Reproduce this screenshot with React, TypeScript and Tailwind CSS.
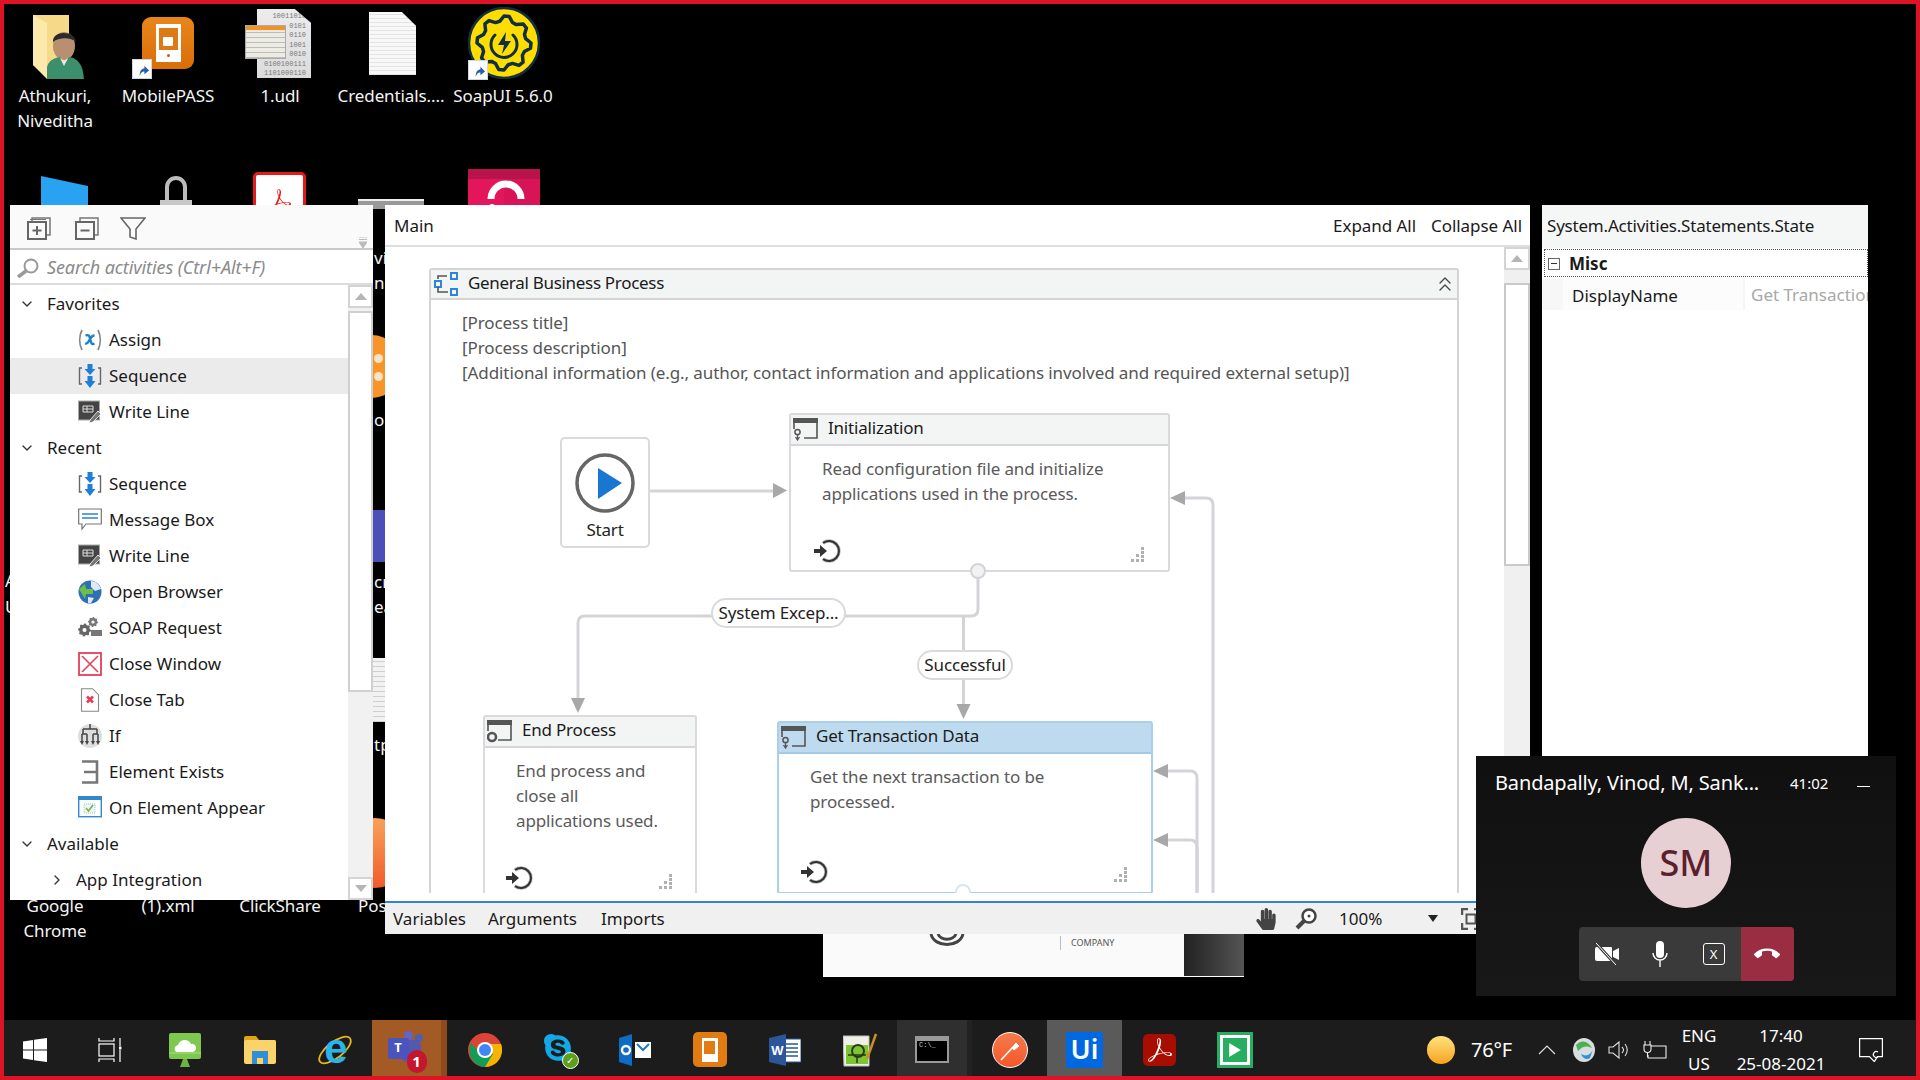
import { ChevronDown, ChevronRight, ChevronsUp } from 'lucide-react'
import { FaHandPaper, FaSkype } from 'react-icons/fa'
import { MdCallEnd } from 'react-icons/md'
import { SiAdobeacrobatreader } from 'react-icons/si'

// gear outline, used by the SoapUI logo and the SOAP Request activity
const gearPath = (cx: number, cy: number, r: number, teeth: number) => {
  const pts: string[] = []
  const steps = teeth * 4
  for (let i = 0; i < steps; i++) {
    const a = (i / steps) * Math.PI * 2
    const rad = i % 4 < 2 ? r : r * 0.82
    pts.push(`${(cx + Math.cos(a) * rad).toFixed(2)} ${(cy + Math.sin(a) * rad).toFixed(2)}`)
  }
  return `M${pts.join('L')}Z`
}

function Shortcut({ className }: { className: string }) {
  return (
    <div className={`absolute flex h-[20px] w-[20px] items-center justify-center border border-gray-300 bg-white ${className}`}>
      <svg viewBox="0 0 16 16" className="h-[15px] w-[15px]">
        <path d="M5 15c0-6 2-8 5-8V4l5 5-5 4v-3c-2 0-4 1-5 5z" fill="#2a5fa8" />
      </svg>
    </div>
  )
}

function DesktopLabel({ className, lines }: { className: string; lines: string[] }) {
  return (
    <div className={`absolute w-[124px] text-center text-[17px] leading-[25px] tracking-[-0.1px] text-[#f4f4f4] ${className}`}>
      {lines.map((l) => (
        <div key={l}>{l}</div>
      ))}
    </div>
  )
}

function DesktopIcons() {
  return (
    <>
      {/* Row 1 */}
      <svg viewBox="0 0 52 64" className="absolute left-[33px] top-[15px] h-[64px] w-[52px]">
        <path d="M0 0h36v60H14L0 50z" fill="#f7d98a" />
        <path d="M0 0l14 8v56L0 50z" fill="#fde9ab" />
        <ellipse cx="31" cy="31" rx="11" ry="14" fill="#b89070" />
        <path d="M20 27c-1-12 22-12 23 0-5-5-17-5-23 0z" fill="#2b2b2b" />
        <path d="M14 64V52c2-8 9-9 13-10l4 8 5-8c6 1 14 4 15 22z" fill="#3c8f6c" />
        <path d="M27 43l4 8 4-8-4 3z" fill="#e8e8e8" />
      </svg>
      <DesktopLabel className="left-[-7px] top-[83px]" lines={['Athukuri,', 'Nivedditha'.replace('dd', 'd')]} />

      <div className="absolute left-[142px] top-[17px] flex h-[52px] w-[52px] items-center justify-center rounded-[9px] bg-gradient-to-b from-[#e9861a] to-[#d96e08]">
        <div className="flex h-[38px] w-[25px] flex-col items-center bg-white pt-[4px]">
          <div className="flex h-[22px] w-[19px] items-center justify-center bg-[#dd7a16]">
            <div className="mt-[4px] h-[9px] w-[10px] rounded-[1px] bg-white" />
          </div>
          <div className="mt-[4px] h-[3px] w-[3px] rounded-full bg-[#d8501a]" />
        </div>
      </div>
      <Shortcut className="left-[132px] top-[59px]" />
      <DesktopLabel className="left-[106px] top-[83px]" lines={['MobilePASS']} />

      <div className="absolute left-[257px] top-[9px] h-[69px] w-[54px] bg-gradient-to-b from-[#ececec] to-[#dcdcdc] pr-[5px] pt-[3px] text-right font-['Liberation_Mono',monospace] text-[7px] leading-[9.5px] text-[#777] [clip-path:polygon(0_0,70%_0,100%_20%,100%_100%,0_100%)]">
        10011010<br />0101<br />0110<br />1001<br />0010<br />0100100111<br />1101000110
      </div>
      <div className="absolute left-[245px] top-[25px] h-[34px] w-[41px] border border-[#aaa] bg-[#e8e5dc]">
        <div className="h-[4px] bg-[#f0932b]" />
        <div className="mt-[1px] h-[27px] bg-[repeating-linear-gradient(0deg,#bdbdb5_0,#bdbdb5_1px,#ecebe4_1px,#ecebe4_5px)]" />
      </div>
      <DesktopLabel className="left-[218px] top-[83px]" lines={['1.udl']} />

      <div className="absolute left-[369px] top-[12px] h-[63px] w-[47px] bg-[repeating-linear-gradient(0deg,#e2e2e2_0,#e2e2e2_1px,#f8f8f8_1px,#f8f8f8_4px)] [clip-path:polygon(0_0,70%_0,100%_22%,100%_100%,0_100%)]" />
      <DesktopLabel className="left-[329px] top-[83px]" lines={['Credentials....']} />

      <svg viewBox="0 0 72 72" className="absolute left-[468px] top-[7px] h-[72px] w-[72px]">
        <circle cx="36" cy="36" r="35" fill="#ffdd00" stroke="#0e2f44" strokeWidth="2.500" />
        <path d={gearPath(36, 36, 27, 8)} fill="none" stroke="#0e2f44" strokeWidth="3.500" strokeLinejoin="round" />
        <path d="M27 28a13 13 0 1 0 18 0" fill="none" stroke="#0e2f44" strokeWidth="3" strokeLinecap="round" />
        <path d="M38 25l-8 13h6l-2 9 9-13h-6z" fill="#0e2f44" />
      </svg>
      <Shortcut className="left-[468px] top-[60px]" />
      <DesktopLabel className="left-[441px] top-[83px]" lines={['SoapUI 5.6.0']} />

      {/* Row 2, mostly behind the studio panels */}
      <div className="absolute left-[41px] top-[176px] h-[40px] w-[47px] bg-[#2aa2f2] [clip-path:polygon(0_0,100%_25%,100%_100%,0_100%)]" />
      <svg viewBox="0 0 32 34" className="absolute left-[160px] top-[175px] h-[34px] w-[32px]">
        <path d="M7 26V12a9 9 0 0 1 18 0v14" fill="none" stroke="#bbb" strokeWidth="4" />
        <rect x="0" y="25" width="32" height="9" fill="#c8c8c8" />
      </svg>
      <div className="absolute left-[253px] top-[172px] flex h-[40px] w-[53px] items-start justify-center rounded-[5px] border-[3px] border-[#e8181b] bg-white pt-[14px] text-[#e8181b]">
        <SiAdobeacrobatreader size={22} />
      </div>
      <div className="absolute left-[358px] top-[199px] h-[10px] w-[66px] border-t-2 border-[#eee] bg-[#999]" />
      <svg viewBox="0 0 72 40" className="absolute left-[468px] top-[169px] h-[40px] w-[72px]">
        <rect x="0" y="0" width="72" height="40" fill="#e3155b" />
        <rect x="0" y="0" width="72" height="10" fill="#b8134a" />
        <rect x="36" y="10" width="36" height="30" fill="#d91456" />
        <path d="M23 30a15 15 0 0 1 30 0" fill="none" stroke="#fff" strokeWidth="7" />
        <circle cx="24" cy="38" r="3" fill="#fff" />
      </svg>

      {/* Icons and labels that show through the gap between the panels */}
      <div className="absolute left-[340px] top-[335px] h-[63px] w-[63px] rounded-full bg-[#f7952a]" />
      <div className="absolute left-[374px] top-[354px] h-[9px] w-[9px] rounded-full bg-[#fbe2c2]" />
      <div className="absolute left-[374px] top-[372px] h-[9px] w-[9px] rounded-full bg-[#fbe2c2]" />
      <div className="absolute left-[350px] top-[510px] h-[52px] w-[45px] rounded-[8px] bg-[#4b50b8]" />
      <div className="absolute left-[340px] top-[658px] h-[64px] w-[60px] bg-[repeating-linear-gradient(0deg,#cfcfcf_0,#cfcfcf_1px,#f2f2f2_1px,#f2f2f2_5px)]" />
      <div className="absolute left-[340px] top-[818px] h-[70px] w-[70px] rounded-full bg-gradient-to-b from-[#f9a05a] to-[#f05a2a]" />
      {[
        ['vi', 'top-[245px]'],
        ['n', 'top-[270px]'],
        ['oN', 'top-[407px]'],
        ['cr', 'top-[569px]'],
        ['ea', 'top-[594px]'],
        ['tp', 'top-[732px]'],
      ].map(([t, cls]) => (
        <span key={t} className={`absolute left-[374px] text-[17px] leading-[25px] text-[#f4f4f4] ${cls}`}>
          {t}
        </span>
      ))}
      <span className="absolute left-[5px] top-[568px] text-[17px] leading-[25px] text-[#f4f4f4]">A</span>
      <span className="absolute left-[5px] top-[594px] text-[17px] leading-[25px] text-[#f4f4f4]">U</span>
      <DesktopLabel className="left-[-7px] top-[893px]" lines={['Google', 'Chrome']} />
      <DesktopLabel className="left-[106px] top-[893px]" lines={['(1).xml']} />
      <DesktopLabel className="left-[218px] top-[893px]" lines={['ClickShare']} />
      <span className="absolute left-[358px] top-[893px] text-[17px] leading-[25px] text-[#f4f4f4]">Pos</span>

      {/* Picture left open behind the studio window */}
      <div className="absolute left-[823px] top-[920px] flex h-[57px] w-[421px] border-b border-white bg-[#fafafa]">
        <div className="relative flex-1">
          <svg viewBox="0 0 36 14" className="absolute left-[106px] top-[14px] h-[14px] w-[36px]">
            <path d="M2 0c3 14 29 14 32 0M9 0c3 7 15 7 18 0" fill="none" stroke="#444" strokeWidth="3" />
          </svg>
          <div className="absolute left-[237px] top-[16px] h-[14px] w-px bg-[#bbb]" />
          <span className="absolute left-[248px] top-[16px] text-[9px] leading-[13px] text-[#555]">COMPANY</span>
        </div>
        <div className="w-[60px] bg-gradient-to-r from-[#222] to-[#555]" />
      </div>
    </>
  )
}

/* ---- activity tree icons, all 24x24 ---- */
function SequenceIcon() {
  return (
    <svg viewBox="0 0 24 24" className="h-[24px] w-[24px]">
      <path d="M4 4H1.500v16H4M20 4h2.500v16H20" fill="none" stroke="#666" strokeWidth="1.400" />
      <path d="M9.500 0h5v5h3L12 11 6.500 5h3zM9.500 12h5v5h3L12 24l-5.500-7h3z" fill="#1f7fd6" />
    </svg>
  )
}
function WriteLineIcon() {
  return (
    <svg viewBox="0 0 24 24" className="h-[24px] w-[24px]">
      <rect x="0.500" y="1" width="21" height="19" fill="#444" stroke="#aaa" />
      <path d="M5 6h10v6H5z" fill="none" stroke="#ddd" />
      <path d="M9 6v6M5 9h10" stroke="#ddd" />
      <path d="M12 20l8-9 3 3-8 8-4 1z" fill="#777" stroke="#fff" strokeWidth="0.800" />
    </svg>
  )
}
function AssignIcon() {
  return (
    <svg viewBox="0 0 24 24" className="h-[24px] w-[24px]">
      <path d="M4 2C1 8 1 16 4 22M20 2c3 6 3 14 0 20" fill="none" stroke="#888" strokeWidth="1.800" />
      <path d="M7.500 7.500c3-1 4 0 4.500 3l1 3.500c.5 2 1.500 2.500 3.500 1.500M16.500 7.500c-2.500 0-4 2.500-5 4.500s-2.500 4-4.500 3.500" fill="none" stroke="#1784c7" strokeWidth="2.400" />
    </svg>
  )
}
function MessageBoxIcon() {
  return (
    <svg viewBox="0 0 24 24" className="h-[24px] w-[24px]">
      <path d="M.7 1h22.600v15H8l-4 5v-5H.7z" fill="#fff" stroke="#777" strokeWidth="1.200" />
      <path d="M4 6h16M4 10h16" stroke="#2b83d8" strokeWidth="1.600" />
    </svg>
  )
}
function OpenBrowserIcon() {
  return (
    <svg viewBox="0 0 24 24" className="h-[24px] w-[24px]">
      <circle cx="12" cy="12" r="11.500" fill="#2f6fb5" />
      <path d="M13 1c5 0 8 3 10 8l-6 2-4-4zM10 17l6 1-3 5h-3z" fill="#dfe9f3" />
      <path d="M1 9l6-5 1 5h7v5H8l-1 5z" fill="#6cc04a" />
    </svg>
  )
}
function SoapIcon() {
  return (
    <svg viewBox="0 0 24 24" className="h-[24px] w-[24px]">
      <path d={gearPath(6.500, 14, 6.500, 8)} fill="#666" />
      <circle cx="6.500" cy="14" r="2" fill="#fff" />
      <path d={gearPath(15, 6, 5, 8)} fill="#777" />
      <circle cx="15" cy="6" r="1.600" fill="#fff" />
      <rect x="13" y="14" width="11" height="6" fill="#777" />
    </svg>
  )
}
function CloseWindowIcon() {
  return (
    <svg viewBox="0 0 24 24" className="h-[24px] w-[24px]">
      <rect x="1" y="1" width="22" height="22" fill="#fff" stroke="#e63e5c" strokeWidth="1.800" />
      <path d="M4 4l16 16M20 4L4 20" stroke="#e63e5c" strokeWidth="1.600" />
    </svg>
  )
}
function CloseTabIcon() {
  return (
    <svg viewBox="0 0 24 24" className="h-[24px] w-[24px]">
      <path d="M3.500.7h11l6 6v16.600h-17z" fill="#fff" stroke="#888" strokeWidth="1.100" />
      <path d="M9 8.500l6 6M15 8.500l-6 6" stroke="#e63e5c" strokeWidth="2.600" />
    </svg>
  )
}
function IfIcon() {
  return (
    <svg viewBox="0 0 24 24" className="h-[24px] w-[24px]">
      <circle cx="12" cy="12" r="12" fill="#dedede" />
      <path d="M12 0v5M5 5h14M5 5v5M19 5v5M4 10v8M9 10v8M15 10v8M20 10v8M4 10h5M15 10h5" fill="none" stroke="#444" strokeWidth="1.500" />
      <path d="M2 17h4l-2 4zM7 17h4l-2 4zM13 17h4l-2 4zM18 17h4l-2 4z" fill="#444" />
    </svg>
  )
}
function ExistsIcon() {
  return (
    <svg viewBox="0 0 24 24" className="h-[24px] w-[24px]">
      <path d="M4 1.500h15v21H4M6 12h13" fill="none" stroke="#777" strokeWidth="2.600" />
    </svg>
  )
}
function AppearIcon() {
  return (
    <svg viewBox="0 0 24 24" className="h-[24px] w-[24px]">
      <rect x=".7" y=".7" width="22.600" height="20" fill="#fff" stroke="#3388cc" strokeWidth="1.400" />
      <rect x="0" y="0" width="24" height="4" fill="#3388cc" />
      <rect x="6" y="8" width="11" height="9" fill="#eef5fb" stroke="#9cc" strokeDasharray="1 1" />
      <path d="M8 12l2.500 3L15 9" fill="none" stroke="#7ab53a" strokeWidth="1.600" />
    </svg>
  )
}

type Row =
  | { kind: 'group'; label: string }
  | { kind: 'sub'; label: string }
  | { kind: 'item'; label: string; icon: React.ReactNode; active?: boolean }

const rows: Row[] = [
  { kind: 'group', label: 'Favorites' },
  { kind: 'item', label: 'Assign', icon: <AssignIcon /> },
  { kind: 'item', label: 'Sequence', icon: <SequenceIcon />, active: true },
  { kind: 'item', label: 'Write Line', icon: <WriteLineIcon /> },
  { kind: 'group', label: 'Recent' },
  { kind: 'item', label: 'Sequence', icon: <SequenceIcon /> },
  { kind: 'item', label: 'Message Box', icon: <MessageBoxIcon /> },
  { kind: 'item', label: 'Write Line', icon: <WriteLineIcon /> },
  { kind: 'item', label: 'Open Browser', icon: <OpenBrowserIcon /> },
  { kind: 'item', label: 'SOAP Request', icon: <SoapIcon /> },
  { kind: 'item', label: 'Close Window', icon: <CloseWindowIcon /> },
  { kind: 'item', label: 'Close Tab', icon: <CloseTabIcon /> },
  { kind: 'item', label: 'If', icon: <IfIcon /> },
  { kind: 'item', label: 'Element Exists', icon: <ExistsIcon /> },
  { kind: 'item', label: 'On Element Appear', icon: <AppearIcon /> },
  { kind: 'group', label: 'Available' },
  { kind: 'sub', label: 'App Integration' },
]

function ArrowBtn({ down, className }: { down?: boolean; className: string }) {
  return (
    <div className={`flex shrink-0 items-center justify-center border-2 border-[#d4d4d4] bg-white ${className}`}>
      <svg viewBox="0 0 12 7" className="h-[7px] w-[12px]">
        <path d={down ? 'M0 0h12L6 7z' : 'M0 7h12L6 0z'} fill="#b5b5b5" />
      </svg>
    </div>
  )
}

function ActivitiesPanel() {
  return (
    <div className="absolute left-[10px] top-[205px] flex h-[695px] w-[363px] flex-col bg-white text-[17px] text-[#1a1a1a]">
      <div className="relative flex h-[45px] items-center gap-[24px] border-b-2 border-[#c9c9c9] bg-[#fafafa] pl-[17px] pt-[3px]">
        <svg viewBox="0 0 24 23" className="h-[23px] w-[24px]">
          <path d="M5 4V1h18v17h-3" fill="none" stroke="#777" strokeWidth="1.500" />
          <path d="M3 2.500h16" stroke="#777" />
          <rect x="1" y="5" width="18" height="17" fill="#fafafa" stroke="#666" strokeWidth="2" />
          <path d="M10 9v9M5.500 13.500h9" stroke="#666" strokeWidth="2" />
        </svg>
        <svg viewBox="0 0 24 23" className="h-[23px] w-[24px]">
          <path d="M5 4V1h18v17h-3" fill="none" stroke="#777" strokeWidth="1.500" />
          <rect x="1" y="5" width="18" height="17" fill="#fafafa" stroke="#666" strokeWidth="2" />
          <path d="M5.500 13.500h9" stroke="#666" strokeWidth="2" />
        </svg>
        <svg viewBox="0 0 26 23" className="-ml-[3px] h-[23px] w-[26px]">
          <path d="M1 1h24l-9 11v10l-6-2v-8z" fill="none" stroke="#666" strokeWidth="1.600" />
        </svg>
        <svg viewBox="0 0 8 11" className="absolute right-[6px] top-[32px] h-[11px] w-[8px]">
          <path d="M0 0h8M0 2.500h8M0 5h8l-4 6z" stroke="#bbb" fill="#bbb" />
        </svg>
      </div>
      <div className="flex h-[35px] items-center gap-[7px] border-b-2 border-[#dcdcdc] pl-[6px] pt-[2px]">
        <svg viewBox="0 0 24 20" className="h-[20px] w-[24px]">
          <circle cx="15" cy="8" r="6.500" fill="#fff" stroke="#999" strokeWidth="2" />
          <path d="M10 13L2 19" stroke="#999" strokeWidth="3.500" />
        </svg>
        <span className="text-[18px] italic tracking-[-0.1px] text-[#8a8a8a]">Search activities (Ctrl+Alt+F)</span>
      </div>
      <div className="flex min-h-0 flex-1">
        <div className="w-[338px] overflow-hidden pt-[1px]">
          {rows.map((r, i) => {
            if (r.kind === 'group') {
              return (
                <div key={i} className="flex h-[36px] items-center gap-[12px] pl-[9px]">
                  <ChevronDown size={16} strokeWidth={2} className="text-[#333]" />
                  <span>{r.label}</span>
                </div>
              )
            }
            if (r.kind === 'sub') {
              return (
                <div key={i} className="flex h-[36px] items-center gap-[11px] pl-[39px]">
                  <ChevronRight size={16} strokeWidth={2} className="text-[#333]" />
                  <span>{r.label}</span>
                </div>
              )
            }
            return (
              <div key={i} className={`flex h-[36px] items-center gap-[7px] pl-[68px] ${r.active ? 'bg-[#ebebeb]' : ''}`}>
                {r.icon}
                <span>{r.label}</span>
              </div>
            )
          })}
        </div>
        <div className="flex w-[25px] flex-col bg-[#f1f1f1]">
          <ArrowBtn className="h-[23px]" />
          <div className="mt-[3px] h-[381px] border-2 border-[#d0d0d0] bg-white" />
          <div className="flex-1" />
          <ArrowBtn down className="h-[23px]" />
        </div>
      </div>
    </div>
  )
}

/* ---- flowchart ---- */
function EntryIcon({ className }: { className: string }) {
  return (
    <svg viewBox="0 0 28 26" className={`absolute h-[26px] w-[28px] ${className}`}>
      <path d="M10 5a10 10 0 1 1 0 16" fill="none" stroke="#bbb" strokeWidth="3.500" />
      <path d="M10 5a10 10 0 1 1 0 16" fill="none" stroke="#333" strokeWidth="2" />
      <path d="M1 11h6V7l7 6-7 6v-4H1z" fill="#333" />
    </svg>
  )
}
function Grip({ className }: { className: string }) {
  return (
    <svg viewBox="0 0 15 15" className={`absolute h-[15px] w-[15px] ${className}`} fill="#b0b0b0">
      <rect x="11" y="0" width="3" height="3" />
      <rect x="11" y="4" width="3" height="3" />
      <rect x="6" y="7" width="3" height="3" />
      <rect x="11" y="8" width="3" height="3" />
      <rect x="1" y="12" width="3" height="3" />
      <rect x="6" y="12" width="3" height="3" />
      <rect x="11" y="12" width="3" height="3" />
    </svg>
  )
}
function StateIcon({ big }: { big?: boolean }) {
  return (
    <svg viewBox="0 0 25 23" className="h-[23px] w-[25px] shrink-0">
      <rect x="0" y="0" width="25" height="5" fill="#555" />
      <path d="M24 5v15H11M1 5v6" fill="none" stroke="#555" strokeWidth="1.600" />
      {big ? (
        <circle cx="5" cy="17" r="4" fill="none" stroke="#555" strokeWidth="2.600" />
      ) : (
        <>
          <circle cx="4.500" cy="14" r="2.600" fill="none" stroke="#555" strokeWidth="1.500" />
          <path d="M4.500 16v6M2.500 19l2 3 2-3" fill="none" stroke="#555" strokeWidth="1.300" />
        </>
      )}
    </svg>
  )
}

function StateNode({
  title,
  lines,
  selected,
  big,
  className,
  children,
}: {
  title: string
  lines: string[]
  selected?: boolean
  big?: boolean
  className: string
  children: React.ReactNode
}) {
  return (
    <div className={`absolute rounded-[3px] border-2 bg-white ${selected ? 'border-[#a9cfeb]' : 'border-[#dadade]'} ${className}`}>
      <div
        className={`flex h-[31px] items-center gap-[10px] border-b-2 pl-[2px] text-[17px] tracking-[-0.2px] text-[#1a1a1a] ${
          selected ? 'border-[#a3cbe8] bg-[#bddaef]' : 'border-[#d6d6da] bg-[#f3f5f5]'
        }`}
      >
        <StateIcon big={big} />
        <span className="pb-[3px]">{title}</span>
      </div>
      <div className="pl-[31px] pt-[10px] text-[17px] leading-[25px] tracking-[-0.12px] text-[#5a5a5a]">
        {lines.map((l) => (
          <div key={l}>{l}</div>
        ))}
      </div>
      {children}
    </div>
  )
}

function Pill({ className, children }: { className: string; children: React.ReactNode }) {
  return (
    <div className={`absolute flex items-center justify-center rounded-full border-2 border-[#dadade] bg-white pb-[1px] text-[17px] tracking-[-0.15px] text-[#222] ${className}`}>
      {children}
    </div>
  )
}

function Diagram() {
  const line = '#d3d3d8'
  const head = '#a8a8a8'
  return (
    <div className="relative flex-1 overflow-hidden">
      {/* connectors, drawn in screen coordinates */}
      <svg viewBox="431 300 1026 593" className="absolute left-0 top-0 h-[593px] w-[1026px]">
        <path d="M649 491H775" fill="none" stroke={line} strokeWidth="3" />
        <path d="M773 483l14 7.500-14 7.500z" fill={head} />
        <path d="M978 575v34q0 7-7 7H585q-7 0-7 7v76" fill="none" stroke={line} strokeWidth="3" />
        <path d="M571 698h14l-7 15z" fill={head} />
        <path d="M963.500 616v90" fill="none" stroke={line} strokeWidth="3" />
        <path d="M956.500 704h14l-7 15z" fill={head} />
        <path d="M1168 771h22q7 0 7 7v115" fill="none" stroke={line} strokeWidth="3" />
        <path d="M1168 764v14l-15-7z" fill={head} />
        <path d="M1168 840h22q7 0 7 7v46" fill="none" stroke={line} strokeWidth="3" />
        <path d="M1168 833v14l-15-7z" fill={head} />
        <path d="M1185 498h21q7 0 7 7v388" fill="none" stroke={line} strokeWidth="3" />
        <path d="M1185 491v14l-15-7z" fill={head} />
      </svg>

      <div className="absolute left-[129px] top-[137px] flex h-[111px] w-[90px] flex-col items-center rounded-[5px] border-2 border-[#dadade] bg-white pt-[14px] text-[17px] tracking-[-0.2px] text-[#222]">
        <svg viewBox="0 0 60 60" className="h-[60px] w-[60px]">
          <circle cx="30" cy="30" r="28" fill="#fff" stroke="#666" strokeWidth="3.500" />
          <path d="M23 15l24 15-24 16z" fill="#1976d2" />
        </svg>
        <span className="mt-[4px]">Start</span>
      </div>

      <StateNode
        title="Initialization"
        lines={['Read configuration file and initialize', 'applications used in the process.']}
        className="left-[358px] top-[113px] h-[159px] w-[381px]"
      >
        <EntryIcon className="left-[22px] top-[123px]" />
        <Grip className="left-[339px] top-[132px]" />
      </StateNode>

      <StateNode
        title="End Process"
        big
        lines={['End process and', 'close all', 'applications used.']}
        className="left-[52px] top-[415px] h-[200px] w-[214px]"
      >
        <EntryIcon className="left-[20px] top-[148px]" />
        <Grip className="left-[173px] top-[157px]" />
      </StateNode>

      <StateNode
        selected
        title="Get Transaction Data"
        lines={['Get the next transaction to be', 'processed.']}
        className="left-[346px] top-[421px] h-[173px] w-[376px]"
      >
        <EntryIcon className="left-[21px] top-[136px]" />
        <Grip className="left-[334px] top-[144px]" />
      </StateNode>

      {/* connection points */}
      <div className="absolute left-[539px] top-[263px] h-[16px] w-[16px] rounded-full border-2 border-[#d3d3d8] bg-[#f2f2f2]" />
      <div className="absolute left-[524px] top-[584px] h-[16px] w-[16px] rounded-full border-2 border-[#d9e6f1] bg-white" />

      <Pill className="left-[280px] top-[298px] h-[30px] w-[135px]">System Excep...</Pill>
      <Pill className="left-[486px] top-[350px] h-[30px] w-[96px]">Successful</Pill>
    </div>
  )
}

function MainWindow() {
  return (
    <div className="absolute left-[385px] top-[205px] flex h-[729px] w-[1145px] flex-col bg-white text-[17px] text-[#1a1a1a]">
      <div className="flex h-[42px] shrink-0 items-center justify-between border-b-2 border-[#dedede] pl-[9px] pr-[8px] pt-[2px]">
        <span>Main</span>
        <div className="flex gap-[15px] tracking-[-0.05px]">
          <span>Expand All</span>
          <span>Collapse All</span>
        </div>
      </div>
      <div className="flex min-h-0 flex-1">
        <div className="min-w-0 flex-1 pl-[44px] pt-[21px]">
          <div className="flex h-[625px] w-[1030px] flex-col rounded-t-[3px] border-x-2 border-t-2 border-[#d3d3d8]">
            <div className="flex h-[30px] shrink-0 items-center gap-[10px] border-b-2 border-[#d3d3d8] bg-[#f3f5f5] pl-[3px]">
              <svg viewBox="0 0 24 24" className="h-[24px] w-[24px]" fill="none">
                <rect x="17" y="1" width="6" height="6" stroke="#2f86d6" strokeWidth="2" />
                <rect x="1" y="9" width="6" height="6" stroke="#2f86d6" strokeWidth="2" />
                <rect x="17" y="17" width="6" height="6" stroke="#2f86d6" strokeWidth="2" />
                <path d="M13 4H4v3M4 15v5h10" stroke="#555" strokeWidth="1.600" />
              </svg>
              <span className="flex-1 pb-[2px] tracking-[-0.3px]">General Business Process</span>
              <ChevronsUp size={24} strokeWidth={1.300} className="text-[#444]" />
            </div>
            <div className="relative flex min-h-0 flex-1 flex-col">
              <div className="pl-[31px] pt-[10px] text-[17px] leading-[25px] tracking-[-0.08px] text-[#555]">
                <div>[Process title]</div>
                <div>[Process description]</div>
                <div>[Additional information (e.g., author, contact information and applications involved and required external setup)]</div>
              </div>
              <div className="absolute inset-0 flex">
                <Diagram />
              </div>
            </div>
          </div>
        </div>
        <div className="flex w-[26px] shrink-0 flex-col bg-[#f0f0f0]">
          <ArrowBtn className="h-[23px]" />
          <div className="mt-[13px] h-[283px] border-2 border-[#c9c9c9] bg-white" />
        </div>
      </div>
      <div className="flex h-[33px] shrink-0 items-center border-t-2 border-[#2f86d6] bg-[#f0f0f0] pl-[8px] pr-[49px]">
        <span className="w-[95px] shrink-0">Variables</span>
        <span className="w-[113px] shrink-0">Arguments</span>
        <span className="shrink-0">Imports</span>
        <div className="ml-auto flex items-center">
          <FaHandPaper size={22} className="text-[#444]" />
          <svg viewBox="0 0 22 22" className="ml-[18px] h-[22px] w-[22px]">
            <circle cx="14" cy="8" r="6.500" fill="#fff" stroke="#444" strokeWidth="2.500" />
            <path d="M9 13L2 20" stroke="#444" strokeWidth="4" />
            <circle cx="14" cy="8" r="1.500" fill="#444" />
          </svg>
          <span className="ml-[22px] w-[89px]">100%</span>
          <svg viewBox="0 0 10 7" className="h-[7px] w-[10px]">
            <path d="M0 0h10L5 7z" fill="#222" />
          </svg>
          <svg viewBox="0 0 20 22" className="ml-[23px] h-[22px] w-[20px]">
            <path d="M1 7V1h6M19 7V1h-6M1 15v6h6M19 15v6h-6" fill="none" stroke="#555" strokeWidth="2.500" />
            <rect x="5.500" y="6.500" width="9" height="9" fill="none" stroke="#555" strokeWidth="2" />
          </svg>
        </div>
      </div>
    </div>
  )
}

function PropertyPanel() {
  return (
    <div className="absolute left-[1542px] top-[205px] flex h-[551px] w-[326px] flex-col bg-white text-[17px] text-[#1a1a1a]">
      <div className="flex h-[43px] shrink-0 items-center bg-[#f5f7f7] pb-[2px] pl-[5px] tracking-[-0.2px]">System.Activities.Statements.State</div>
      <div className="ml-[2px] mt-[1px] flex h-[28px] shrink-0 items-center gap-[9px] border border-dotted border-[#555] pl-[3px] pt-[1px] font-bold">
        <span className="flex h-[12px] w-[12px] items-center justify-center border border-[#666]">
          <span className="h-px w-[6px] bg-[#333]" />
        </span>
        <span>Misc</span>
      </div>
      <div className="mt-[2px] flex h-[31px] shrink-0 items-center">
        <div className="h-full w-[21px] bg-[#f7f7f7]" />
        <div className="flex h-full w-[182px] items-center border-r-2 border-[#f5f5f5] bg-[#fcfcfc] pl-[9px] pt-[2px]">DisplayName</div>
        <div className="min-w-0 flex-1 overflow-hidden whitespace-nowrap pl-[6px] text-[#a8a8a8]">Get Transaction Data</div>
      </div>
    </div>
  )
}

function CallPanel() {
  return (
    <div className="absolute left-[1476px] top-[756px] flex h-[240px] w-[420px] flex-col items-center bg-gradient-to-b from-[#101010] to-[#181818] text-white">
      <div className="flex h-[54px] w-full shrink-0 items-center pl-[19px]">
        <span className="w-[295px] text-[20px] tracking-[-0.15px]">Bandapally, Vinod, M, Sank...</span>
        <span className="w-[67px] text-[15px]">41:02</span>
        <span className="mt-[7px] h-[1.500px] w-[13px] bg-white" />
      </div>
      <div className="mt-[8px] flex h-[90px] w-[90px] items-center justify-center rounded-full bg-[#e6d0d4] text-[36px] font-medium text-[#5c1f2c]">
        SM
      </div>
      <div className="mt-[19px] flex h-[54px] w-[215px] overflow-hidden rounded-[4px] bg-[#3a3a3a]">
        <div className="flex w-[54px] items-center justify-center pl-[2px]">
          <svg viewBox="0 0 24 22" className="h-[22px] w-[24px]">
            <path d="M2 4h14a1 1 0 0 1 1 1v12a1 1 0 0 1-1 1H2a2 2 0 0 1-2-2V6a2 2 0 0 1 2-2zM18 8l6-3v12l-6-3z" fill="#fff" />
            <path d="M1 0l20 22" stroke="#3a3a3a" strokeWidth="3" />
            <path d="M1 0l20 22" stroke="#fff" strokeWidth="1" />
          </svg>
        </div>
        <div className="flex w-[54px] items-center justify-center">
          <svg viewBox="0 0 16 26" className="h-[26px] w-[16px]">
            <rect x="4" y="0" width="8" height="17" rx="4" fill="#fff" />
            <path d="M1 12a7 7 0 0 0 14 0M8 19v7" fill="none" stroke="#fff" strokeWidth="1.400" />
          </svg>
        </div>
        <div className="flex w-[54px] items-center justify-center">
          <div className="flex h-[22px] w-[22px] items-center justify-center rounded-[3px] border border-white text-[13px] leading-none">X</div>
        </div>
        <div className="flex flex-1 items-center justify-center bg-[#9b2d42]">
          <MdCallEnd size={26} className="text-white" />
        </div>
      </div>
    </div>
  )
}

/* ---- taskbar ---- */
function WinLogo() {
  return (
    <svg viewBox="0 0 24 24" className="h-[24px] w-[24px]" fill="#fff">
      <path d="M0 3.500l10-1.500v9.500H0zM11 1.800L24 0v11.500H11zM0 12.500h10V22L0 20.500zM11 12.500h13V24l-13-1.800z" />
    </svg>
  )
}
function TaskView() {
  return (
    <svg viewBox="0 0 24 24" className="h-[24px] w-[24px]" fill="none" stroke="#fff" strokeWidth="1.200">
      <path d="M1 0v3h15V0M1 24v-3h15v3" />
      <rect x="1" y="6" width="15" height="12" />
      <path d="M22 0v8M22 12v12" />
      <rect x="21" y="8.500" width="2.400" height="3" fill="#fff" stroke="none" />
    </svg>
  )
}
const taskIcons: { key: string; active?: 'orange' | 'dim' | 'light'; icon: React.ReactNode }[] = [
  { key: 'start', icon: <WinLogo /> },
  { key: 'view', icon: <TaskView /> },
  {
    key: 'cloud',
    icon: (
      <svg viewBox="0 0 32 34" className="h-[34px] w-[32px]">
        <rect x="0" y="0" width="32" height="26" rx="2" fill="#7ec850" />
        <path d="M7 19a4 4 0 0 1 2-7 7 7 0 0 1 13-1 4 4 0 0 1 2 8z" fill="#fff" />
        <path d="M0 20h32" stroke="#a7e07e" />
        <path d="M11 34l3-8h4l3 8z" fill="#6db33f" />
      </svg>
    ),
  },
  {
    key: 'folder',
    icon: (
      <svg viewBox="0 0 32 28" className="h-[28px] w-[32px]">
        <path d="M0 2a2 2 0 0 1 2-2h10l3 4h15a2 2 0 0 1 2 2v4H0z" fill="#e0a515" />
        <rect x="0" y="4" width="32" height="24" rx="2" fill="#fcd36a" />
        <path d="M8 28V15h16v13h-5v-6h-6v6z" fill="#2f8fd8" />
      </svg>
    ),
  },
  {
    key: 'ie',
    icon: (
      <svg viewBox="0 0 34 34" className="h-[34px] w-[34px] overflow-visible">
        <ellipse cx="17" cy="17" rx="19" ry="8" transform="rotate(-38 17 17)" fill="none" stroke="#e6b518" strokeWidth="1.800" />
        <text x="18" y="30" textAnchor="middle" fontFamily="Liberation Sans, sans-serif" fontWeight="700" fontSize="42" fill="#2ab4ea">
          e
        </text>
      </svg>
    ),
  },
  {
    key: 'teams',
    active: 'orange',
    icon: (
      <div className="relative h-[38px] w-[38px]">
        <div className="absolute left-[16px] top-0 h-[9px] w-[9px] rounded-full bg-[#6264c8]" />
        <div className="absolute left-[27px] top-[3px] h-[8px] w-[8px] rounded-full bg-[#4e5eb0]" />
        <div className="absolute left-[13px] top-[9px] h-[22px] w-[20px] rounded-[6px] bg-[#5558af]" />
        <div className="absolute left-0 top-[7px] flex h-[21px] w-[21px] items-center justify-center rounded-[2px] bg-[#4b53bc] text-[13px] font-bold text-white">T</div>
        <div className="absolute left-[19px] top-[19px] flex h-[23px] w-[20px] items-center justify-center rounded-full bg-[#c4162e] text-[15px] font-bold text-white">1</div>
      </div>
    ),
  },
  {
    key: 'chrome',
    icon: (
      <svg viewBox="0 0 34 34" className="h-[34px] w-[34px]">
        <circle cx="17" cy="17" r="17" fill="#db4437" />
        <path d="M17 34A17 17 0 0 0 33 11H17l-3 6z" fill="#f4b400" />
        <path d="M17 34l8-13-8-4-8 0-6-7a17 17 0 0 0 14 24z" fill="#0f9d58" />
        <circle cx="17" cy="17" r="8" fill="#fff" />
        <circle cx="17" cy="17" r="6" fill="#4285f4" />
      </svg>
    ),
  },
  {
    key: 'skype',
    icon: (
      <div className="relative h-[36px] w-[36px]">
        <FaSkype size={32} className="text-[#13a8e8]" />
        <div className="absolute left-[20px] top-[20px] flex h-[17px] w-[17px] items-center justify-center rounded-full border border-white bg-[#5c9e1e] text-[10px] text-white">✓</div>
      </div>
    ),
  },
  {
    key: 'outlook',
    icon: (
      <svg viewBox="0 0 32 32" className="h-[32px] w-[32px]">
        <path d="M16 8h16v16H16z" fill="#fff" />
        <path d="M18 10l6 6 6-6" fill="none" stroke="#1e77c8" strokeWidth="2" />
        <path d="M0 4l13-4v32L0 28z" fill="#0f6cc5" />
        <circle cx="7" cy="16" r="4" fill="none" stroke="#fff" strokeWidth="2.400" />
      </svg>
    ),
  },
  {
    key: 'mobilepass',
    icon: (
      <div className="flex h-[35px] w-[34px] items-center justify-center rounded-[5px] bg-[#e27c12]">
        <div className="flex h-[24px] w-[16px] items-start justify-center bg-white pt-[3px]">
          <div className="h-[13px] w-[11px] bg-[#e27c12]" />
        </div>
      </div>
    ),
  },
  {
    key: 'word',
    icon: (
      <svg viewBox="0 0 32 32" className="h-[32px] w-[32px]">
        <rect x="13" y="5" width="19" height="23" fill="#fff" stroke="#2b579a" />
        <path d="M17 10h12M17 14h12M17 18h12M17 22h12" stroke="#2b579a" strokeWidth="1.500" />
        <path d="M0 4l17-4v32L0 28z" fill="#2b579a" />
        <text x="8.500" y="21" textAnchor="middle" fontFamily="Liberation Sans, sans-serif" fontWeight="700" fontSize="13" fill="#fff">
          W
        </text>
      </svg>
    ),
  },
  {
    key: 'npp',
    icon: (
      <svg viewBox="0 0 34 34" className="h-[34px] w-[34px]">
        <path d="M0 3h26v30H1z" fill="#f0f0e8" stroke="#bbb" />
        <path d="M3 12h22v19H3z" fill="#7ec433" />
        <circle cx="15" cy="18" r="6" fill="none" stroke="#2a3a1a" strokeWidth="2" />
        <path d="M5 22h18M14 24v6" stroke="#2a3a1a" strokeWidth="1.500" />
        <path d="M24 26L33 1" stroke="#c89020" strokeWidth="2.500" />
      </svg>
    ),
  },
  {
    key: 'cmd',
    active: 'dim',
    icon: (
      <div className="flex h-[27px] w-[34px] flex-col border-2 border-[#999] bg-black">
        <div className="h-[3px] bg-[#999]" />
        <span className="pl-[2px] font-['Liberation_Mono',monospace] text-[7px] leading-[9px] text-[#ccc]">C:\_</span>
      </div>
    ),
  },
  {
    key: 'postman',
    icon: (
      <div className="flex h-[36px] w-[36px] items-center justify-center rounded-full border border-white bg-gradient-to-b from-[#f47a4a] to-[#f4572a]">
        <svg viewBox="0 0 24 24" className="h-[24px] w-[24px]" fill="none" stroke="#fff">
          <path d="M3 22L15 9" strokeWidth="1.600" />
          <path d="M14 10l4-5 3 3-5 4z" fill="#fff" />
        </svg>
      </div>
    ),
  },
  {
    key: 'ui',
    active: 'light',
    icon: <div className="flex h-[36px] w-[37px] items-center justify-center bg-[#0068e0] text-[27px] font-semibold text-white">Ui</div>,
  },
  {
    key: 'acrobat',
    icon: (
      <div className="flex h-[32px] w-[33px] items-center justify-center rounded-[5px] bg-[#a70d00] text-white">
        <SiAdobeacrobatreader size={24} />
      </div>
    ),
  },
  {
    key: 'green',
    icon: (
      <div className="flex h-[36px] w-[36px] items-center justify-center border-[3px] border-[#27ae60] bg-white">
        <div className="flex h-[24px] w-[24px] items-center justify-center bg-[#27ae60]">
          <svg viewBox="0 0 10 12" className="h-[14px] w-[12px]">
            <path d="M0 0l10 6-10 6z" fill="#fff" />
          </svg>
        </div>
      </div>
    ),
  },
]

function Taskbar() {
  return (
    <div className="flex h-[56px] shrink-0 items-center bg-[#1c1c1c] text-white">
      <div className="flex h-full flex-none -translate-x-[3px]">
        {taskIcons.map((t) => (
          <div
            key={t.key}
            className={`flex h-full w-[75px] items-center justify-center pt-[3px] ${
              t.active === 'orange'
                ? 'border-r-[6px] border-[#8f4a1c] bg-[#a35a25]'
                : t.active === 'dim'
                  ? 'border-r-[5px] border-[#222] bg-[#2f2f2f]'
                  : t.active === 'light'
                    ? 'bg-[#5a5a5a]'
                    : ''
            }`}
          >
            {t.icon}
          </div>
        ))}
      </div>
      <div className="ml-auto flex items-center pr-[37px] pt-[3px]">
        <div className="h-[28px] w-[28px] rounded-full bg-gradient-to-b from-[#ffe27a] to-[#f7a310]" />
        <span className="ml-[16px] w-[42px] text-[20px] tracking-[-0.2px]">76°F</span>
        <svg viewBox="0 0 18 10" className="ml-[25px] h-[10px] w-[18px]">
          <path d="M1 9l8-8 8 8" fill="none" stroke="#ddd" strokeWidth="1.200" />
        </svg>
        <svg viewBox="0 0 22 24" className="ml-[17px] h-[24px] w-[22px]">
          <ellipse cx="11" cy="12" rx="11" ry="12" fill="#d8dde0" />
          <path d="M3 7c6-6 12-4 16 3-4-2-9-3-14 3z" fill="#4caf50" />
          <path d="M8 16c5 3 10 1 12-5l-3 9c-3 2-7 1-9-4z" fill="#2f8fd8" />
        </svg>
        <svg viewBox="0 0 24 20" className="ml-[13px] h-[20px] w-[24px]" fill="none" stroke="#ddd" strokeWidth="1.100">
          <path d="M1 7h4l6-5v16l-6-5H1z" />
          <path d="M14 7c2 2 2 4 0 6M17 4c3 4 3 8 0 12" />
        </svg>
        <svg viewBox="0 0 24 20" className="ml-[11px] h-[20px] w-[24px]" fill="none" stroke="#eee" strokeWidth="1.100">
          <path d="M2 1v4M7 1v4M1 5h7v4a3 3 0 0 1-7 0zM4.500 12v5" />
          <path d="M8 6h15v12H5v-3" />
        </svg>
        <div className="ml-[4px] flex w-[56px] flex-col items-center text-[17px] leading-[28px]">
          <span>ENG</span>
          <span>US</span>
        </div>
        <div className="flex w-[108px] flex-col items-center text-[17px] leading-[28px]">
          <span>17:40</span>
          <span>25-08-2021</span>
        </div>
        <svg viewBox="0 0 24 24" className="ml-[24px] h-[24px] w-[24px]" fill="none" stroke="#fff" strokeWidth="1.200">
          <path d="M.6.6h22.800v18h-5l-3 5-5-5H.6z" />
          <path d="M19 14a3 3 0 1 0 0 5" />
        </svg>
      </div>
    </div>
  )
}

export default function App() {
  return (
    <div className="relative flex h-[1080px] w-[1920px] flex-col overflow-hidden bg-black font-['Noto_Sans',sans-serif]">
      {/* desktop: the windows sit where the user dragged them */}
      <div className="relative min-h-0 flex-1">
        <DesktopIcons />
        <ActivitiesPanel />
        <MainWindow />
        <PropertyPanel />
        <CallPanel />
      </div>
      <Taskbar />
      <div className="h-[4px] shrink-0" />
      {/* red capture frame */}
      <div className="pointer-events-none absolute inset-0 border-4 border-[#dc1426]" />
    </div>
  )
}
